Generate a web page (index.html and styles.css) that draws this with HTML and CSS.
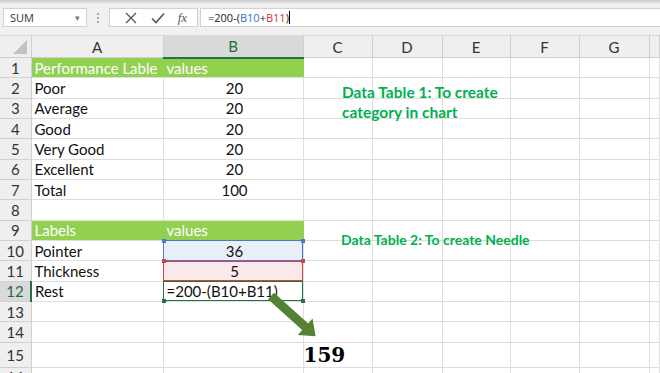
FILE: index.html
```html
<!DOCTYPE html>
<html lang="en">
<head>
    <meta charset="UTF-8">
    <title>Gauge Chart Data</title>
    <link rel="stylesheet" href="styles.css">
</head>
<body>
    <div class="topbar">
        <div class="namebox">SUM <span class="caret">&#9662;</span></div>
        <div class="grip"><i></i><i></i><i></i></div>
        <div class="fx-box">
            <svg width="14" height="14" viewBox="0 0 14 14"><path d="M2 2 L12 12 M12 2 L2 12" stroke="#555" stroke-width="1.3" fill="none"/></svg>
            <svg width="16" height="14" viewBox="0 0 16 14"><path d="M2 7.5 L6 11.5 L14 2.5" stroke="#555" stroke-width="1.6" fill="none"/></svg>
            <span class="fx">fx</span>
        </div>
        <div class="formula">=200-(<span class="ref-blue">B10</span>+<span class="ref-red">B11</span>)<span class="cursor"></span></div>
    </div>

    <div class="sheet-wrap">
        <table class="sheet">
            <colgroup>
                <col style="width:31px"><col style="width:132px"><col style="width:140px">
                <col style="width:69px"><col style="width:70px"><col style="width:68px">
                <col style="width:69px"><col style="width:70px"><col>
            </colgroup>
            <tr class="col-head">
                <th class="corner"><span class="tri"></span></th>
                <th>A</th><th class="sel">B</th><th>C</th><th>D</th><th>E</th><th>F</th><th>G</th><th></th>
            </tr>
            <tr><th>1</th><td class="head-fill">Performance Lable</td><td class="head-fill">values</td><td></td><td></td><td></td><td></td><td></td><td></td></tr>
            <tr><th>2</th><td>Poor</td><td class="num">20</td><td></td><td></td><td></td><td></td><td></td><td></td></tr>
            <tr><th>3</th><td>Average</td><td class="num">20</td><td></td><td></td><td></td><td></td><td></td><td></td></tr>
            <tr><th>4</th><td>Good</td><td class="num">20</td><td></td><td></td><td></td><td></td><td></td><td></td></tr>
            <tr><th>5</th><td>Very Good</td><td class="num">20</td><td></td><td></td><td></td><td></td><td></td><td></td></tr>
            <tr><th>6</th><td>Excellent</td><td class="num">20</td><td></td><td></td><td></td><td></td><td></td><td></td></tr>
            <tr><th>7</th><td>Total</td><td class="num">100</td><td></td><td></td><td></td><td></td><td></td><td></td></tr>
            <tr><th>8</th><td></td><td></td><td></td><td></td><td></td><td></td><td></td><td></td></tr>
            <tr><th>9</th><td class="head-fill">Labels</td><td class="head-fill">values</td><td></td><td></td><td></td><td></td><td></td><td></td></tr>
            <tr><th>10</th><td>Pointer</td><td class="num ref ref-b10">36<span class="mark"></span></td><td></td><td></td><td></td><td></td><td></td><td></td></tr>
            <tr><th>11</th><td>Thickness</td><td class="num ref ref-b11">5<span class="mark"></span></td><td></td><td></td><td></td><td></td><td></td><td></td></tr>
            <tr><th class="sel-row">12</th><td>Rest</td><td class="ref active">=200-(B10+B11)<span class="mark"></span></td><td></td><td></td><td></td><td></td><td></td><td></td></tr>
            <tr><th>13</th><td></td><td></td><td></td><td></td><td></td><td></td><td></td><td></td></tr>
            <tr><th>14</th><td></td><td></td><td></td><td></td><td></td><td></td><td></td><td></td></tr>
            <tr><th>15</th><td></td><td></td><td class="result">159</td><td></td><td></td><td></td><td></td><td></td></tr>
            <tr><th>16</th><td></td><td></td><td></td><td></td><td></td><td></td><td></td><td></td></tr>
        </table>

        <div class="note note-1">Data Table 1: To create<br>category in chart</div>
        <div class="note note-2">Data Table 2: To create Needle</div>

        <svg class="arrow" width="660" height="340" viewBox="0 0 660 340">
            <g transform="translate(271 261) rotate(42)">
                <polygon points="0,-4.5 46,-4.5 46,-11 60,0 46,11 46,4.5 0,4.5" fill="#548235"/>
            </g>
        </svg>
    </div>
</body>
</html>
```

FILE: styles.css
```css
body {
    margin: 0;
    width: 660px;
    height: 373px;
    overflow: hidden;
    background: #fff;
    font-family: 'Lato', 'Open Sans', sans-serif;
}
.topbar {
    height: 35px;
    background: linear-gradient(#c9c9c9 0, #e4e4e4 3px, #f1f1f1 4px, #f1f1f1 100%);
    display: flex;
    align-items: flex-start;
    padding-top: 8px;
    box-sizing: border-box;
    font-family: 'Open Sans', sans-serif;
}
.namebox {
    width: 84px;
    height: 19px;
    margin-left: 3px;
    background: #fff;
    border: 1px solid #d2d2d2;
    box-sizing: border-box;
    font-size: 11px;
    color: #333;
    line-height: 17px;
    padding-left: 6px;
    position: relative;
}
.caret {
    position: absolute;
    right: 6px;
    top: 0;
    font-size: 9px;
    color: #777;
}
.grip {
    width: 22px;
    display: flex;
    flex-direction: column;
    align-items: center;
    gap: 2px;
    padding-top: 5px;
}
.grip i {
    width: 2px;
    height: 2px;
    background: #aaa;
}
.fx-box {
    width: 89px;
    height: 19px;
    background: #fff;
    border: 1px solid #d2d2d2;
    box-sizing: border-box;
    display: flex;
    align-items: center;
    justify-content: space-around;
    padding: 0 4px 0 8px;
}
.fx {
    font-family: 'Liberation Serif', serif;
    font-style: italic;
    font-size: 13px;
    color: #555;
}
.formula {
    flex: 1;
    height: 19px;
    margin-left: 2px;
    background: #fff;
    border: 1px solid #d2d2d2;
    border-right: none;
    box-sizing: border-box;
    font-size: 11px;
    line-height: 17px;
    padding-left: 7px;
    color: #222;
}
.ref-blue { color: #3a6fd0; }
.ref-red { color: #d13438; }
.cursor {
    display: inline-block;
    width: 1px;
    height: 13px;
    background: #000;
    vertical-align: -2px;
}
.sheet-wrap {
    position: relative;
}
.sheet {
    border-collapse: collapse;
    table-layout: fixed;
    width: 660px;
    font-size: 15px;
    color: #111;
}
.sheet th, .sheet td {
    padding: 0;
    height: 20.33px;
    border-right: 1px solid #dedede;
    border-bottom: 1px solid #dedede;
    white-space: nowrap;
    overflow: visible;
    box-sizing: border-box;
}
.sheet td {
    padding-left: 3px;
    text-align: left;
}
.sheet th {
    background: #efefef;
    font-weight: normal;
    color: #333;
    border-color: #d0d0d0;
    text-align: center;
}
.col-head th {
    height: 22px;
    background: #efefef;
    border-top: 1px solid #d6d6d6;
    border-bottom: 1px solid #cfcfcf;
    font-size: 15px;
}
.col-head th.sel {
    background: #d9d9d9;
    color: #1f6b3f;
    border-bottom: 2px solid #217346;
}
.corner {
    position: relative;
}
.tri {
    position: absolute;
    right: 4px;
    bottom: 3px;
    width: 0;
    height: 0;
    border-left: 14px solid transparent;
    border-bottom: 14px solid #c2c2c2;
}
.sheet th.sel-row {
    background: #d9d9d9;
    color: #1f6b3f;
    border-right: 2px solid #217346;
}
.head-fill {
    background: #92d050;
    color: #fff;
    border-right-color: #92d050 !important;
}
.num {
    text-align: center !important;
}
.ref {
    position: relative;
}
.ref-b10 {
    background: #e8eff9;
    outline: 1px solid #4a78cf;
    outline-offset: -1px;
}
.ref-b11 {
    background: #fbe8e8;
    outline: 1px solid #cc4444;
    outline-offset: -1px;
}
.active {
    outline: 1px solid #217346;
    outline-offset: -1px;
}
.mark::before, .mark::after {
    content: "";
    position: absolute;
    top: -2px;
    width: 4px;
    height: 4px;
    background: inherit;
}
.ref-b10 .mark::before, .ref-b10 .mark::after { background: #4a78cf; }
.ref-b11 .mark::before, .ref-b11 .mark::after { background: #cc4444; }
.active .mark::before, .active .mark::after { background: #217346; top: auto; bottom: -2px; }
.mark::before { left: -2px; }
.mark::after { right: -2px; }
.result {
    font-family: 'DejaVu Serif', serif;
    font-weight: bold;
    font-size: 20px;
    color: #000;
    padding-left: 0 !important;
}
.note {
    position: absolute;
    color: #00b050;
    font-weight: bold;
    white-space: nowrap;
}
.note-1 {
    left: 342px;
    top: 47px;
    font-size: 15.5px;
    line-height: 20px;
}
.note-2 {
    left: 341px;
    top: 196px;
    font-size: 14px;
}
.arrow {
    position: absolute;
    left: 0;
    top: 0;
    pointer-events: none;
}
```
